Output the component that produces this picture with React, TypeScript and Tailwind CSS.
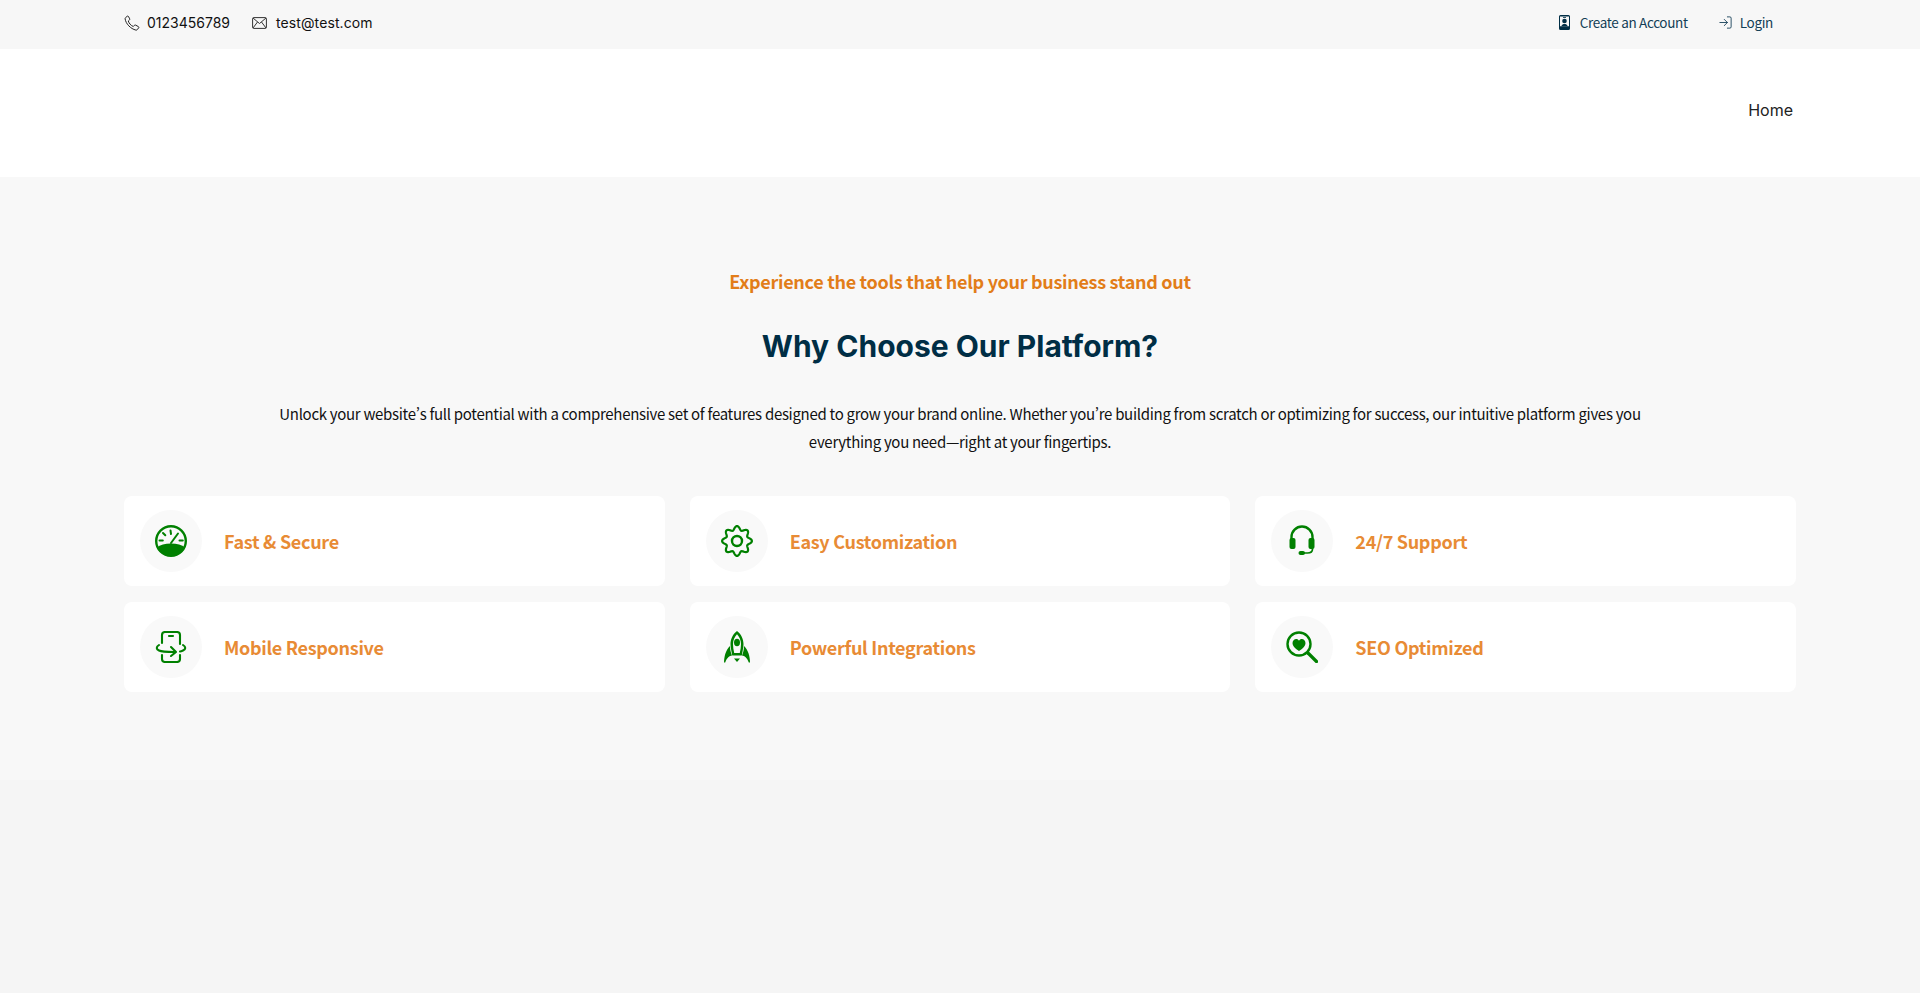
import { LogIn } from 'lucide-react'
import type { ReactNode } from 'react'

function Gauge() {
  return (
    <svg viewBox="0 0 32 32" className="h-[32px] w-[32px]" fill="none" stroke="#008000" strokeWidth="2.400" strokeLinecap="round">
      <circle cx="16" cy="16" r="14.800" />
      <path d="M15.500 5.500l.5 3.500M8 8l2.300 2.300M4.500 15.500h3.300M24.500 15.500h3.300M16 18l7-9.500" strokeWidth="2" />
      <path d="M2 22.500c3-2.500 8-4 14-4s11 1.500 14 4c-2.500 5.500-8 8.500-14 8.500S4.500 28 2 22.500z" fill="#008000" stroke="none" />
    </svg>
  )
}

function gearPath() {
  const pts: string[] = []
  for (let i = 0; i < 160; i++) {
    const a = (i / 160) * Math.PI * 2
    const r = 13 + 1.9 * Math.cos(8 * a)
    pts.push(`${(16 + r * Math.sin(a)).toFixed(2)} ${(16 - r * Math.cos(a)).toFixed(2)}`)
  }
  return `M${pts.join('L')}Z`
}

function Gear() {
  return (
    <svg viewBox="0 0 32 32" className="h-[32px] w-[32px]" fill="none" stroke="#008000" strokeWidth="2.200" strokeLinejoin="round">
      <path d={gearPath()} />
      <circle cx="16" cy="16" r="5" strokeWidth="2.400" />
    </svg>
  )
}

function Headset() {
  return (
    <svg viewBox="0 0 26 32" className="h-[32px] w-[26px]" fill="none" stroke="#008000" strokeWidth="2.400" strokeLinecap="round">
      <path d="M2.500 14V12a10.500 10.500 0 0 1 21 0v2" />
      <rect x="0.500" y="13" width="6" height="11" rx="2" fill="#008000" stroke="none" />
      <rect x="19.500" y="13" width="6" height="11" rx="2" fill="#008000" stroke="none" />
      <path d="M23.500 24c0 3-2 4-5 4h-4" strokeWidth="1.700" />
      <rect x="9.500" y="26" width="6.500" height="4" rx="2" fill="#008000" stroke="none" />
    </svg>
  )
}

function PhoneTurn() {
  return (
    <svg viewBox="0 0 32 32" className="h-[32px] w-[32px]" fill="none" stroke="#008000" strokeWidth="2.100" strokeLinecap="round" strokeLinejoin="round">
      <path d="M7 12V4a3 3 0 0 1 3-3h12a3 3 0 0 1 3 3v9M7 24v4a3 3 0 0 0 3 3h12a3 3 0 0 0 3-3V24" />
      <path d="M14 5h4" />
      <path d="M4 14c-3 2-3 4 0 5.500 2 1 5 1.500 15 1.500M28 14c3 2 3 4 0 5.500-1 .5-2 1-3 1" />
      <path d="M16 16l5 5-5 4" />
    </svg>
  )
}

function Rocket() {
  return (
    <svg viewBox="0 0 26 32" className="h-[32px] w-[26px]" fill="#008000">
      <path fillRule="evenodd" d="M13 0c4 3 6.500 8 6.500 13 0 2-.2 4-.7 6l-1 5.500H8.200l-1-5.500c-.5-2-.7-4-.7-6C6.500 8 9 3 13 0zm0 3.200C10.800 5.500 9 9 9 13c0 3 .5 6 1.200 9h5.600c.7-3 1.200-6 1.200-9 0-4-1.800-7.500-4-9.800z" />
      <ellipse cx="13" cy="11.500" rx="3" ry="3.800" />
      <path d="M6 15c0 3 .5 6 2 9.500-2.500.5-5 2-6.800 7L0 31.500c0-6 2-13 6-16.500zM20 15c0 3-.5 6-2 9.500 2.500.5 5 2 6.800 7l1.200 0c0-6-2-13-6-16.500zM10 27.500h6L13 31z" />
    </svg>
  )
}

function SeoHeart() {
  return (
    <svg viewBox="0 0 32 32" className="h-[32px] w-[32px]" fill="none" stroke="#008000" strokeWidth="2.400" strokeLinecap="round">
      <circle cx="13" cy="13" r="11.500" />
      <path d="M22 22l8.500 8.500" strokeWidth="3.200" />
      <path d="M13 20c-4.500-3-6.500-5.300-6.500-7.800C6.500 9.800 8.200 8 10.200 8c1.200 0 2.200.6 2.800 1.700C13.600 8.600 14.600 8 15.800 8c2 0 3.700 1.800 3.700 4.200 0 2.500-2 4.800-6.500 7.800z" fill="#008000" stroke="none" />
    </svg>
  )
}

function HandsetIcon() {
  return (
    <svg viewBox="0 0 16 16" className="h-[16px] w-[16px]" fill="none" stroke="#222" strokeWidth="1" strokeLinejoin="round">
      <path d="M1.500 2.700 3.300 1.200c.4-.3.9-.2 1.100.2l1.300 2.400c.2.400.1.800-.2 1.100L4.300 6c.6 2.200 2.400 4.400 5 5.500l1.100-1.200c.3-.3.800-.4 1.200-.2l2.900 1.600c.4.200.5.700.2 1.100l-1.500 1.900c-.3.400-.8.500-1.300.4C6.600 13.800 1.800 8.800 1.100 3.800c0-.4.100-.8.400-1.100z" />
    </svg>
  )
}

function EnvelopeIcon() {
  return (
    <svg viewBox="0 0 15 12" className="h-[12px] w-[15px]" fill="none" stroke="#333" strokeWidth="1" strokeLinejoin="round">
      <rect x="0.600" y="0.600" width="13.800" height="10.800" rx="1" />
      <path d="M1 1l6.500 5.500L14 1M1 11l4.500-6M14 11L9.500 5" />
    </svg>
  )
}

function AccountIcon() {
  return (
    <svg viewBox="0 0 11 15" className="h-[15px] w-[11px]" fill="#002e45">
      <path fillRule="evenodd" d="M1.500 0h8A1.500 1.500 0 0 1 11 1.500v12A1.500 1.500 0 0 1 9.500 15h-8A1.500 1.500 0 0 1 0 13.500v-12A1.500 1.500 0 0 1 1.500 0zM1 1.500v9.800h9V1.500z" />
      <circle cx="5.500" cy="6" r="2.300" />
      <path d="M2.300 11.300c.5-1.800 1.800-2.300 3.200-2.300s2.700.5 3.200 2.300z" />
      <path d="M4 2.500h3" stroke="#002e45" strokeWidth=".8" />
    </svg>
  )
}

function Feature({ icon, title }: { icon: ReactNode; title: string }) {
  return (
    <div className="flex h-[90px] items-center rounded-[8px] bg-white pl-[16px]">
      <div className="flex h-[62px] w-[62px] shrink-0 items-center justify-center rounded-full bg-[#f9f9f9]">{icon}</div>
      <h3 className="ml-[22px] mt-[1px] font-['Noto_Sans_CJK_SC',sans-serif] text-[18px] font-semibold tracking-[-0.3px] text-[#e88b35]">{title}</h3>
    </div>
  )
}

export default function App() {
  return (
    <div className="min-h-[993px] bg-[#f5f5f5]">
      <div className="flex h-[49px] items-center justify-between bg-[#f7f7f7] pb-[4px] pl-[124px] pr-[147px]">
        <div className="flex items-center gap-[22px] font-['Inter',sans-serif] text-[14px] text-[#111]">
          <span className="flex items-center gap-[7px]"><HandsetIcon />0123456789</span>
          <span className="flex items-center gap-[9px] tracking-[0.1px]"><EnvelopeIcon />test@test.com</span>
        </div>
        <div className="flex items-center gap-[30px] font-['Noto_Sans_CJK_SC',sans-serif] text-[13.500px] tracking-[-0.33px] text-[#133e56]">
          <span className="flex items-center gap-[10px]"><AccountIcon />Create an Account</span>
          <span className="flex items-center gap-[7px]"><LogIn size={15} strokeWidth={1.400} />Login</span>
        </div>
      </div>

      <div className="flex h-[128px] items-center justify-end bg-white pb-[6px] pr-[127px] font-['Inter',sans-serif] text-[16px] text-[#222]">
        Home
      </div>

      <section className="h-[603px] bg-[#f8f8f8] px-[124px] pt-[92px]">
        <div className="text-center font-['Noto_Sans_CJK_SC',sans-serif]">
          <p className="text-[18px] font-semibold leading-[24px] tracking-[-0.3px] text-[#e27d19]">Experience the tools that help your business stand out</p>
          <h2 className="mt-[33px] font-['Inter',sans-serif] text-[30px] font-bold leading-[40px] text-[#002e45]">Why Choose Our Platform?</h2>
          <p className="mx-auto mt-[34px] w-[1380px] text-[15px] leading-[28px] tracking-[-0.3px] text-[#111] [font-feature-settings:'pwid']">
            Unlock your website’s full potential with a comprehensive set of features designed to grow your brand online. Whether you’re building from scratch or optimizing for success, our intuitive platform gives you everything you need—right at your fingertips.
          </p>
        </div>
        <div className="mt-[40px] grid grid-cols-3 gap-x-[25px] gap-y-[16px]">
          <Feature icon={<Gauge />} title="Fast & Secure" />
          <Feature icon={<Gear />} title="Easy Customization" />
          <Feature icon={<Headset />} title="24/7 Support" />
          <Feature icon={<PhoneTurn />} title="Mobile Responsive" />
          <Feature icon={<Rocket />} title="Powerful Integrations" />
          <Feature icon={<SeoHeart />} title="SEO Optimized" />
        </div>
      </section>
    </div>
  )
}
